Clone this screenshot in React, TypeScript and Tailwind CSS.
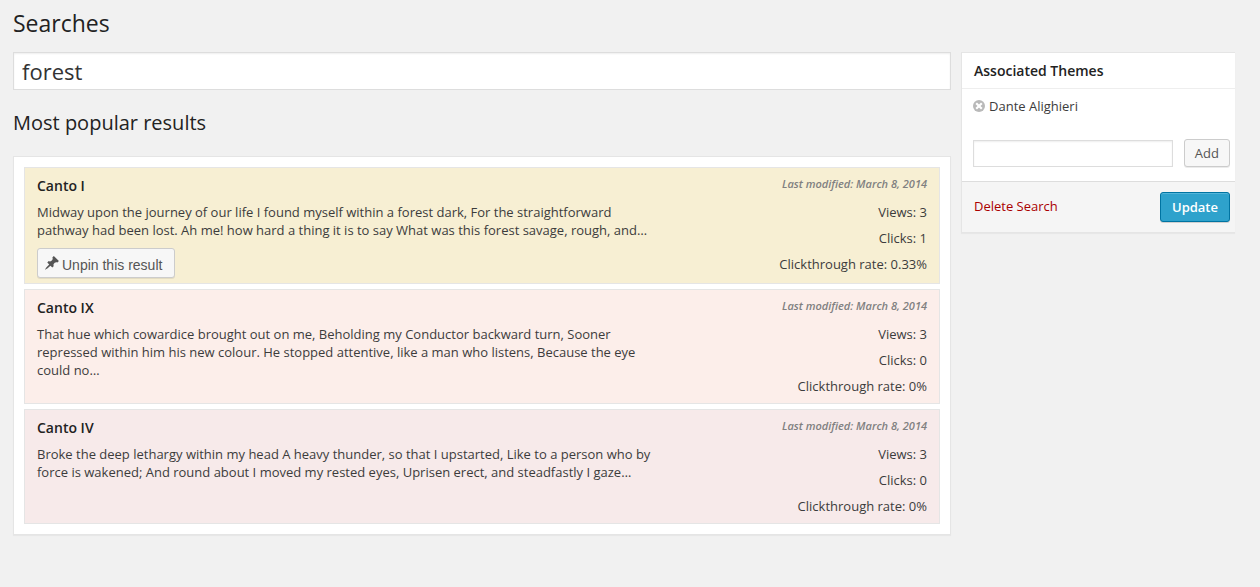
import React from "react";

type Result = {
  title: string;
  excerpt: string;
  modified: string;
  views: number;
  clicks: number;
  rate: string;
  pinned?: boolean;
  tone: string;
};

const results: Result[] = [
  {
    title: "Canto I",
    excerpt:
      "Midway upon the journey of our life I found myself within a forest dark, For the straightforward pathway had been lost. Ah me! how hard a thing it is to say What was this forest savage, rough, and…",
    modified: "March 8, 2014",
    views: 3,
    clicks: 1,
    rate: "0.33%",
    pinned: true,
    tone: "bg-[#f7efd3]",
  },
  {
    title: "Canto IX",
    excerpt:
      "That hue which cowardice brought out on me, Beholding my Conductor backward turn, Sooner repressed within him his new colour. He stopped attentive, like a man who listens, Because the eye could no…",
    modified: "March 8, 2014",
    views: 3,
    clicks: 0,
    rate: "0%",
    tone: "bg-[#fceeea]",
  },
  {
    title: "Canto IV",
    excerpt:
      "Broke the deep lethargy within my head A heavy thunder, so that I upstarted, Like to a person who by force is wakened; And round about I moved my rested eyes, Uprisen erect, and steadfastly I gaze…",
    modified: "March 8, 2014",
    views: 3,
    clicks: 0,
    rate: "0%",
    tone: "bg-[#f7eaea]",
  },
];

function PinIcon() {
  return (
    <svg viewBox="0 0 20 20" className="size-4 shrink-0" fill="currentColor" aria-hidden="true">
      <path d="M10.44 3.02l1.82-1.82 6.36 6.35-1.83 1.82c-1.05-.68-2.48-.57-3.41.36l-.75.75c-.92.93-1.04 2.35-.35 3.41l-1.83 1.82-2.41-2.41-2.8 2.79c-.42.42-3.38 2.71-3.8 2.29s1.86-3.39 2.28-3.81l2.79-2.79L4.1 9.36l1.83-1.82c1.05.69 2.48.57 3.4-.36l.75-.75c.93-.92 1.05-2.35.36-3.41z" />
    </svg>
  );
}

function RemoveIcon() {
  return (
    <svg viewBox="0 0 12 12" className="size-3" aria-hidden="true">
      <circle cx="6" cy="6" r="6" fill="#b9b9b9" />
      <path d="M3.2 3.2l5.6 5.6M8.8 3.2l-5.6 5.6" stroke="#fff" strokeWidth="2.2" />
    </svg>
  );
}

function ResultCard({ result }: { result: Result }) {
  return (
    <li
      className={`flex min-h-[115px] justify-between border border-[#e5e5e5] px-3 pt-2 pb-[5px] ${result.tone}`}
    >
      <div className="w-[69%]">
        <h3 className="text-sm leading-5 font-semibold text-[#222]">{result.title}</h3>
        <p className="mt-[7px] text-[13px] leading-[18px]">{result.excerpt}</p>
        {result.pinned && (
          <button
            type="button"
            className="mt-[9px] flex h-[30px] items-center gap-[2px] rounded-[3px] border border-[#ccc] bg-[#f7f7f7] pr-3 pl-[6px] font-['Liberation_Sans',sans-serif] text-sm text-[#555] shadow-[0_1px_0_rgba(0,0,0,0.08)]"
          >
            <PinIcon />
            <span className="pt-[3px]">Unpin this result</span>
          </button>
        )}
      </div>
      <div className="text-right text-[13px] leading-[18px] whitespace-nowrap">
        <p className="text-[11px] leading-4 font-semibold text-[#808080] italic">
          Last modified: {result.modified}
        </p>
        <ul className="mt-[11px] flex flex-col gap-2">
          <li>Views: {result.views}</li>
          <li>Clicks: {result.clicks}</li>
          <li>Clickthrough rate: {result.rate}</li>
        </ul>
      </div>
    </li>
  );
}

export default function App() {
  return (
    <div className="min-h-screen bg-[#f1f1f1] pt-2 pr-[25px] pb-8 pl-[13px] font-['Open_Sans',sans-serif] text-[13px] text-[#3c3c3c]">
      <h1 className="text-[23px] leading-[30px] text-[#222]">Searches</h1>
      <div className="mt-[14px] flex items-start gap-[10px]">
        <main className="min-w-0 flex-1">
          <input
            type="text"
            aria-label="Search term"
            defaultValue="forest"
            className="block h-[38px] w-full border border-[#ddd] bg-white px-2 text-[22px] text-[#333] shadow-[inset_0_1px_2px_rgba(0,0,0,0.07)] outline-none"
          />
          <h2 className="mt-[18px] text-[20px] leading-[30px] text-[#222]">Most popular results</h2>
          <ul className="mt-[18px] flex flex-col gap-[5px] border border-[#e5e5e5] bg-white p-[10px] shadow-[0_1px_1px_rgba(0,0,0,0.04)]">
            {results.map((result) => (
              <ResultCard key={result.title} result={result} />
            ))}
          </ul>
        </main>
        <aside className="w-[274px] shrink-0 border-y border-l border-[#e5e5e5] bg-white shadow-[0_1px_1px_rgba(0,0,0,0.04)]">
          <h2 className="border-b border-[#eee] px-3 pt-2 pb-[7px] text-sm leading-5 font-semibold text-[#222]">
            Associated Themes
          </h2>
          <div className="pt-2 pr-[5px] pb-[14px] pl-[11px]">
            <div className="flex items-center gap-1 leading-[18px]">
              <button type="button" aria-label="Remove Dante Alighieri">
                <RemoveIcon />
              </button>
              <span>Dante Alighieri</span>
            </div>
            <form className="mt-6 flex items-center justify-between" onSubmit={(e) => e.preventDefault()}>
              <input
                type="text"
                aria-label="New theme"
                className="h-[27px] w-[200px] border border-[#ddd] bg-white px-1 shadow-[inset_0_1px_2px_rgba(0,0,0,0.07)] outline-none"
              />
              <button
                type="submit"
                className="h-7 rounded-[3px] border border-[#ccc] bg-[#f7f7f7] px-[10px] pt-px text-[#555] shadow-[0_1px_0_rgba(0,0,0,0.08)]"
              >
                Add
              </button>
            </form>
          </div>
          <div className="flex items-center justify-between border-t border-[#ddd] bg-[#f5f5f5] py-[10px] pr-[5px] pl-3">
            <a href="#delete" className="text-[#a00]">
              Delete Search
            </a>
            <button
              type="button"
              className="h-[30px] rounded-[3px] border border-[#0074a2] bg-[#2ea2cc] px-[11px] pt-px font-semibold text-white shadow-[inset_0_1px_0_rgba(120,200,230,0.5),0_1px_0_rgba(0,0,0,0.15)]"
            >
              Update
            </button>
          </div>
        </aside>
      </div>
    </div>
  );
}
